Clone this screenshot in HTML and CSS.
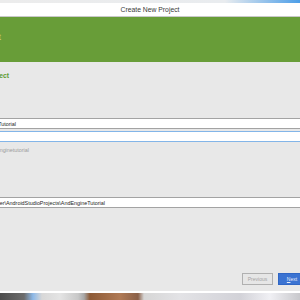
FILE: index.html
```html
<!DOCTYPE html>
<html lang="en">
<head>
    <meta charset="UTF-8">
    <title>Create New Project</title>
    <link rel="stylesheet" href="styles.css">
</head>
<body>
    <div class="window">
        <div class="top-strip"></div>
        <div class="title-bar">Create New Project</div>
        <div class="banner">
            <div class="banner-title"><span>New Project</span></div>
        </div>
        <div class="content">
            <div class="section-title"><span>Configure your new project</span></div>
            <div class="field field-name">
                <div class="val val-name"><span>AndEngineTutorial</span></div>
            </div>
            <div class="field field-focus"></div>
            <div class="hint"><span>Package name: com.example.andenginetutorial</span></div>
            <div class="field field-loc">
                <div class="val val-loc"><span>C:\Users\user\AndroidStudioProjects\AndEngineTutorial</span></div>
            </div>
            <div class="buttons">
                <button class="btn btn-prev">Previous</button>
                <button class="btn btn-next"><u>N</u>ext</button>
            </div>
        </div>
        <div class="gap"></div>
        <div class="photo"></div>
    </div>
</body>
</html>
```
FILE: styles.css
```css
* {
    margin: 0;
    padding: 0;
    box-sizing: border-box;
}
body {
    width: 300px;
    height: 300px;
    overflow: hidden;
    font-family: 'Liberation Sans', Arial, sans-serif;
    background: #e8e8e8;
}
.window {
    display: flex;
    flex-direction: column;
    height: 300px;
}
.top-strip {
    height: 3px;
    background: linear-gradient(90deg, #ececec 0%, #e9ecef 75%, #4c9ee8 100%);
}
.title-bar {
    height: 14px;
    background: #fff;
    border-bottom: 1px solid #c9c9c9;
    text-align: center;
    font-size: 6.8px;
    line-height: 13px;
    color: #3a3a3a;
}
.banner {
    height: 45px;
    background: #689d38;
    padding-top: 15px;
}
.banner-title {
    width: 1px;
    display: flex;
    justify-content: flex-end;
    white-space: nowrap;
    color: #c9cf80;
    font-size: 9px;
    line-height: 10px;
}
.content {
    height: 229px;
    background: #e8e8e8;
    padding-top: 10px;
    display: flex;
    flex-direction: column;
}
.section-title {
    width: 9px;
    display: flex;
    justify-content: flex-end;
    white-space: nowrap;
    color: #5d9b31;
    font-weight: bold;
    font-size: 6.8px;
    line-height: 8px;
}
.field {
    height: 11px;
    margin-right: -4px;
    background: #fff;
    border: 1px solid #a3a3a3;
    border-left: none;
    display: flex;
    align-items: center;
}
.field-name {
    margin-top: 38px;
}
.field-focus {
    margin-top: 2px;
    border-color: #83b5e8;
}
.field-loc {
    margin-top: 43px;
}
.val {
    display: flex;
    justify-content: flex-end;
    white-space: nowrap;
    font-size: 5.4px;
    color: #1e1e1e;
}
.val-name {
    width: 16px;
}
.val-loc {
    width: 105px;
}
.hint {
    width: 29px;
    margin-top: 5px;
    display: flex;
    justify-content: flex-end;
    white-space: nowrap;
    font-size: 5.4px;
    line-height: 7px;
    color: #9c9c9c;
}
.buttons {
    margin-top: auto;
    margin-bottom: 6px;
    display: flex;
    justify-content: flex-end;
    gap: 5px;
    margin-right: -6px;
}
.btn {
    height: 12px;
    font-family: inherit;
    font-size: 5px;
    border-radius: 0;
}
.btn-prev {
    width: 31px;
    background: #e6e6e6;
    border: 1px solid #b0b0b0;
    color: #a4a4a4;
}
.btn-next {
    width: 28px;
    background: #3b73d2;
    border: 1px solid #3066c4;
    color: #e8eefa;
}
.gap {
    height: 2px;
    background: #fff;
}
.photo {
    flex: 1;
    background: linear-gradient(90deg, #4d4d4d 0%, #6c6c6c 8%, #8db9e8 11%, #d8d8d8 14%, #e4e4e4 20%, #c8c8c8 26%, #a9a9a9 28%, #8d5a36 30%, #b07a55 40%, #8a6048 46%, #d6d6d6 48%, #e3e3e6 60%, #d2d2d8 80%, #f0f0f4 90%, #c8c8cc 100%);
}
```
